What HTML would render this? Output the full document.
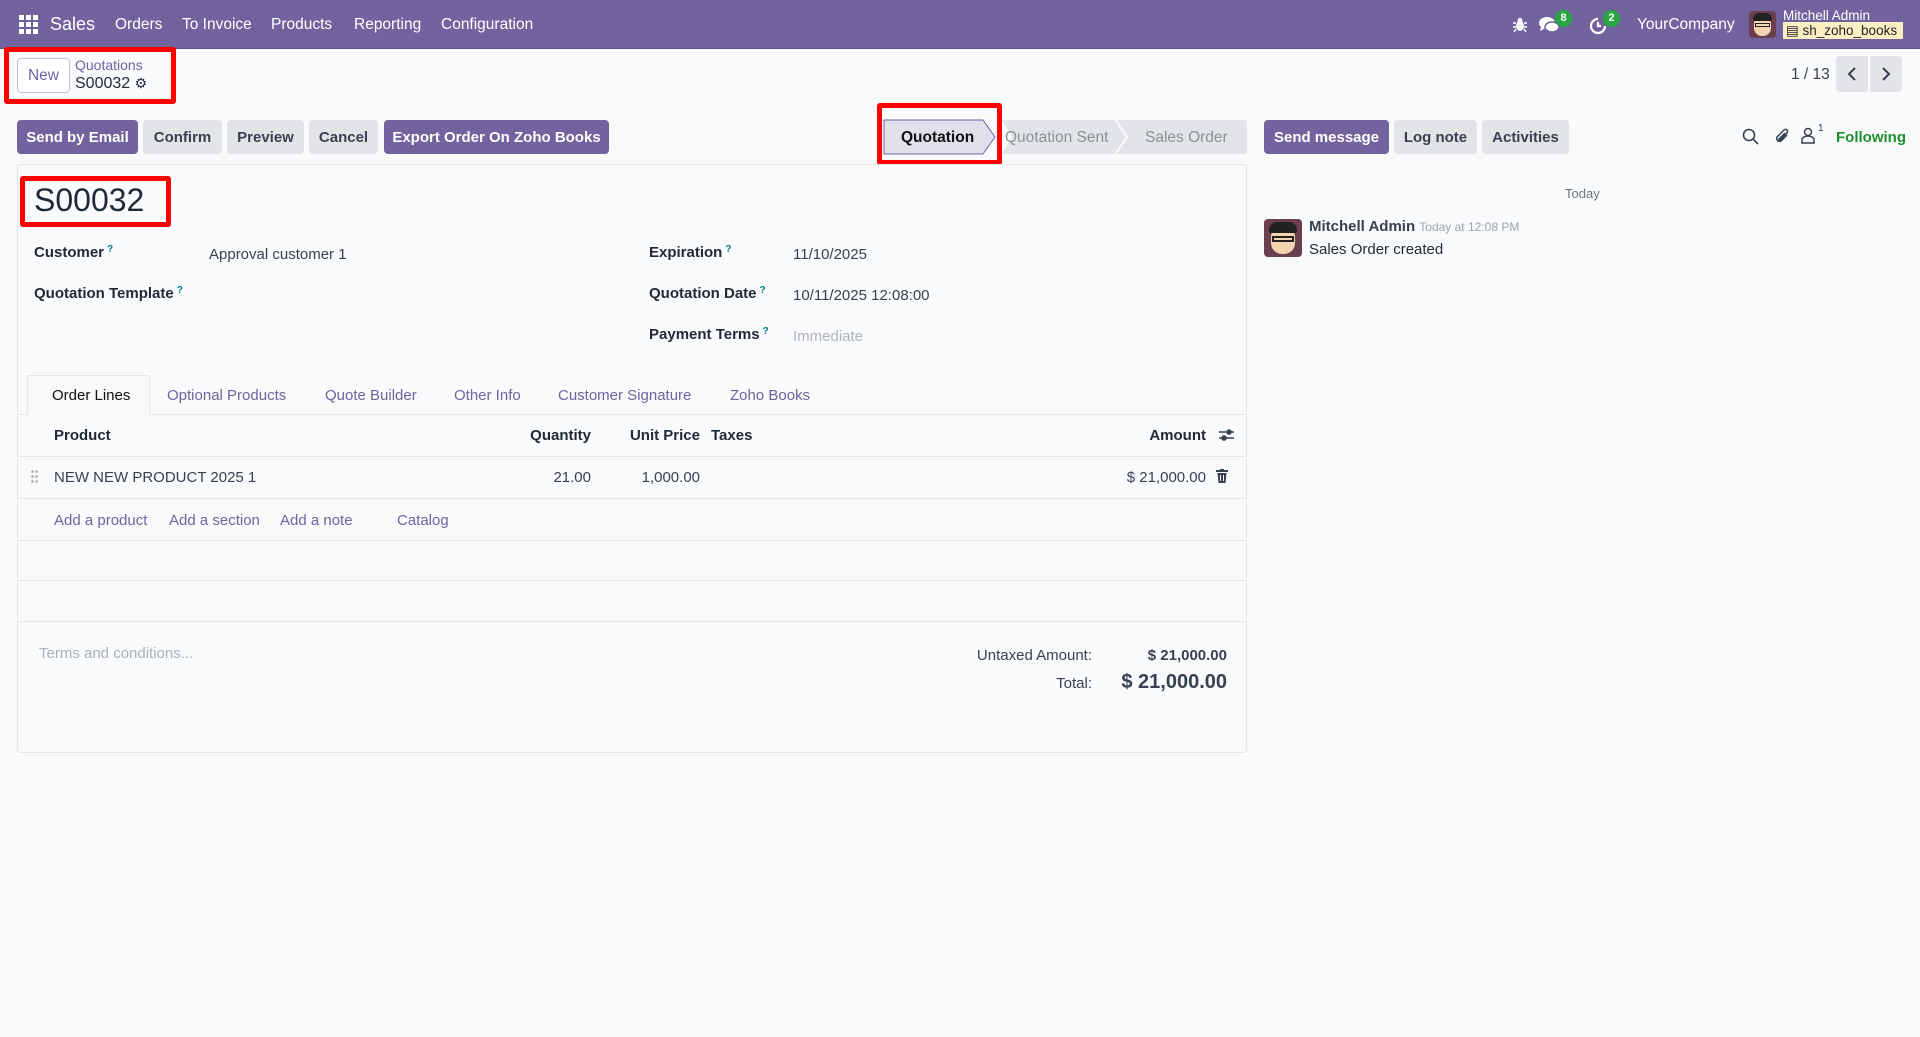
<!DOCTYPE html>
<html><head><meta charset="utf-8"><style>
*{box-sizing:border-box;margin:0;padding:0}
body{width:1920px;height:1037px;background:#f9fafb;font-family:"Liberation Sans",sans-serif;font-size:15px;color:#374151;position:relative;overflow:hidden}
.a{position:absolute;white-space:nowrap}
.nav{position:absolute;left:0;top:0;width:1920px;height:49px;background:#71639e;border-bottom:1px solid #5f5289;color:#fff}
.nav .a{top:16px;font-size:15.5px;color:#fff}
.btn{position:absolute;top:120px;height:34px;border-radius:4px;font-size:15px;line-height:35px;text-align:center;font-weight:bold}
.p{background:#71639e;color:#fff}
.s{background:#e3e4e8;color:#374151}
.red{position:absolute;border:5px solid #f00;border-radius:3px}
.lbl{font-weight:bold;color:#1f2937}
.q{color:#017e84;font-size:10px;vertical-align:top;margin-left:3px}
.tab{color:#71639e}
.hl{position:absolute;left:18px;width:1229px;height:1px;background:#e5e7eb}
.lnk{color:#71639e}
.badge{position:absolute;top:10px;height:17px;min-width:17px;border-radius:9px;background:#28a745;color:#fff;font-size:11px;font-weight:bold;text-align:center;line-height:17px}
</style></head><body>
<div class="nav">
 <svg class="a" style="left:19px;top:15px" width="19" height="19" viewBox="0 0 19 19" fill="#fff"><rect x="0" y="0" width="5" height="5"/><rect x="7" y="0" width="5" height="5"/><rect x="14" y="0" width="5" height="5"/><rect x="0" y="7" width="5" height="5"/><rect x="7" y="7" width="5" height="5"/><rect x="14" y="7" width="5" height="5"/><rect x="0" y="14" width="5" height="5"/><rect x="7" y="14" width="5" height="5"/><rect x="14" y="14" width="5" height="5"/></svg>
 <div class="a" style="left:50px;top:14px;font-size:18px">Sales</div>
 <div class="a" style="left:115px">Orders</div>
 <div class="a" style="left:182px">To Invoice</div>
 <div class="a" style="left:271px">Products</div>
 <div class="a" style="left:354px">Reporting</div>
 <div class="a" style="left:441px">Configuration</div>
 <svg class="a" style="left:1513px;top:17px" width="14" height="16" viewBox="0 0 14 16" fill="#fff"><ellipse cx="7" cy="9" rx="4" ry="5"/><circle cx="7" cy="3.5" r="2.5"/><path d="M0 6h3M11 6h3M0 10h3M11 10h3M1 15l2-3M13 15l-2-3" stroke="#fff" stroke-width="1.5"/></svg>
 <svg class="a" style="left:1539px;top:16px" width="22" height="18" viewBox="0 0 22 18" fill="#fff"><ellipse cx="8" cy="7" rx="8" ry="6"/><ellipse cx="13" cy="11" rx="7" ry="5" fill="#fff" stroke="#71639e" stroke-width="1.5"/><path d="M2 11l-1 4 4-2z"/></svg>
 <div class="badge" style="left:1555px">8</div>
 <svg class="a" style="left:1589px;top:17px" width="18" height="18" viewBox="0 0 18 18" fill="none" stroke="#fff" stroke-width="2.2"><path d="M9 2a7 7 0 1 0 7 7"/><path d="M9 5v4h3"/></svg>
 <div class="badge" style="left:1603px">2</div>
 <div class="a" style="left:1637px">YourCompany</div>
 <div class="a" style="left:1749px;top:11px;width:27px;height:27px;border-radius:4px;background:#6b3f4f;overflow:hidden"><div style="position:absolute;left:5px;top:5px;width:17px;height:20px;border-radius:8px;background:#f3d3b0"></div><div style="position:absolute;left:4px;top:2px;width:19px;height:8px;border-radius:6px 6px 2px 2px;background:#222"></div><div style="position:absolute;left:6px;top:12px;width:15px;height:4px;border:1.5px solid #222"></div></div>
 <div class="a" style="left:1783px;top:8px;font-size:13.5px">Mitchell Admin</div>
 <div class="a" style="left:1783px;top:22px;width:120px;height:17px;background:#fbefc4;color:#222;font-size:13.5px;line-height:17px;padding-left:3px">&#9636; sh_zoho_books</div>
</div>

<div class="red" style="left:4px;top:47px;width:172px;height:57px"></div>
<div class="a" style="left:17px;top:58px;width:53px;height:35px;border:1px solid #c5c0d8;border-radius:4px;background:#fff;color:#71639e;text-align:center;line-height:33px;font-size:15.5px">New</div>
<div class="a lnk" style="left:75px;top:57px;font-size:14px">Quotations</div>
<div class="a" style="left:75px;top:75px;font-size:16px;color:#1f2937">S00032 <span style="font-size:14px">&#9881;</span></div>
<div class="a" style="left:1791px;top:66px;font-size:15.5px;color:#374151">1 / 13</div>
<div class="a" style="left:1836px;top:56px;width:66px;height:36px;background:#e3e4e8;border-radius:4px"></div>
<div class="a" style="left:1868px;top:56px;width:2px;height:36px;background:#f9fafb"></div>
<svg class="a" style="left:1846px;top:66px" width="12" height="16" viewBox="0 0 12 16" fill="none" stroke="#374151" stroke-width="2"><path d="M9 2L3 8l6 6"/></svg>
<svg class="a" style="left:1880px;top:66px" width="12" height="16" viewBox="0 0 12 16" fill="none" stroke="#374151" stroke-width="2"><path d="M3 2l6 6-6 6"/></svg>

<div class="btn p" style="left:17px;width:121px">Send by Email</div>
<div class="btn s" style="left:143px;width:79px">Confirm</div>
<div class="btn s" style="left:227px;width:77px">Preview</div>
<div class="btn s" style="left:309px;width:69px">Cancel</div>
<div class="btn p" style="left:384px;width:225px">Export Order On Zoho Books</div>

<svg class="a" style="left:882px;top:119px" width="366" height="36" viewBox="0 0 366 36">
 <path d="M120 1H362q3 0 3 3v28q0 3-3 3H120l10-17z" fill="#e3e4e8"/>
 <path d="M2 1H101l12 17-12 17H2z" fill="#e1dfec" stroke="#71639e" stroke-width="1"/>
 <path d="M233 0l12 18-12 18" fill="none" stroke="#f9fafb" stroke-width="2"/>
</svg>
<div class="a" style="left:901px;top:129px;font-size:15.5px;font-weight:bold;color:#111">Quotation</div>
<div class="a" style="left:1005px;top:129px;font-size:15.5px;color:#8a8f99">Quotation Sent</div>
<div class="a" style="left:1145px;top:129px;font-size:15.5px;color:#8a8f99">Sales Order</div>
<div class="red" style="left:877px;top:103px;width:125px;height:62px"></div>

<div class="a" style="left:17px;top:164px;width:1230px;height:589px;border:1px solid #e5e7eb;border-radius:3px;background:#f9fafb"></div>
<div class="red" style="left:20px;top:176px;width:151px;height:51px"></div>
<div class="a" style="left:34px;top:182px;font-size:32px;color:#1f2937">S00032</div>

<div class="a lbl" style="left:34px;top:244px">Customer<span class="q">?</span></div>
<div class="a" style="left:209px;top:246px">Approval customer 1</div>
<div class="a lbl" style="left:34px;top:285px">Quotation Template<span class="q">?</span></div>
<div class="a lbl" style="left:649px;top:244px">Expiration<span class="q">?</span></div>
<div class="a" style="left:793px;top:246px">11/10/2025</div>
<div class="a lbl" style="left:649px;top:285px">Quotation Date<span class="q">?</span></div>
<div class="a" style="left:793px;top:287px">10/11/2025 12:08:00</div>
<div class="a lbl" style="left:649px;top:326px">Payment Terms<span class="q">?</span></div>
<div class="a" style="left:793px;top:328px;color:#b0b4bb">Immediate</div>

<div class="a" style="left:27px;top:375px;width:123px;height:40px;border:1px solid #e5e7eb;border-bottom:none;background:#f9fafb;z-index:2"></div>
<div class="hl" style="top:414px"></div>
<div class="a" style="left:52px;top:387px;color:#111;z-index:3">Order Lines</div>
<div class="a tab" style="left:167px;top:387px">Optional Products</div>
<div class="a tab" style="left:325px;top:387px">Quote Builder</div>
<div class="a tab" style="left:454px;top:387px">Other Info</div>
<div class="a tab" style="left:558px;top:387px">Customer Signature</div>
<div class="a tab" style="left:730px;top:387px">Zoho Books</div>

<div class="a lbl" style="left:54px;top:427px">Product</div>
<div class="a lbl" style="right:1329px;top:427px">Quantity</div>
<div class="a lbl" style="right:1220px;top:427px">Unit Price</div>
<div class="a lbl" style="left:711px;top:427px">Taxes</div>
<div class="a lbl" style="right:714px;top:427px">Amount</div>
<svg class="a" style="left:1219px;top:428px" width="15" height="14" viewBox="0 0 15 14" stroke="#374151" stroke-width="1.6"><path d="M0 4h15M0 10h15"/><circle cx="10" cy="4" r="2" fill="#374151"/><circle cx="5" cy="10" r="2" fill="#374151"/></svg>
<div class="hl" style="top:456px"></div>
<svg class="a" style="left:31px;top:470px" width="7" height="13" viewBox="0 0 7 13" fill="#aaa"><circle cx="1.5" cy="1.5" r="1.3"/><circle cx="5.5" cy="1.5" r="1.3"/><circle cx="1.5" cy="6.5" r="1.3"/><circle cx="5.5" cy="6.5" r="1.3"/><circle cx="1.5" cy="11.5" r="1.3"/><circle cx="5.5" cy="11.5" r="1.3"/></svg>
<div class="a" style="left:54px;top:469px">NEW NEW PRODUCT 2025 1</div>
<div class="a" style="right:1329px;top:469px">21.00</div>
<div class="a" style="right:1220px;top:469px">1,000.00</div>
<div class="a" style="right:714px;top:469px">$ 21,000.00</div>
<svg class="a" style="left:1216px;top:469px" width="12" height="14" viewBox="0 0 12 14" fill="#374151"><rect x="0" y="1" width="12" height="2"/><rect x="4" y="0" width="4" height="2"/><path d="M1.5 4h9l-1 10h-7z"/><path d="M4.5 6v6M7.5 6v6" stroke="#f9fafb" stroke-width="1"/></svg>
<div class="hl" style="top:498px"></div>
<div class="a lnk" style="left:54px;top:512px">Add a product</div>
<div class="a lnk" style="left:169px;top:512px">Add a section</div>
<div class="a lnk" style="left:280px;top:512px">Add a note</div>
<div class="a lnk" style="left:397px;top:512px">Catalog</div>
<div class="hl" style="top:540px"></div>
<div class="hl" style="top:580px"></div>
<div class="hl" style="top:621px"></div>

<div class="a" style="left:39px;top:645px;color:#aab0b7">Terms and conditions...</div>
<div class="a" style="right:828px;top:647px">Untaxed Amount:</div>
<div class="a" style="right:693px;top:647px;font-weight:bold">$ 21,000.00</div>
<div class="a" style="right:828px;top:675px">Total:</div>
<div class="a" style="right:693px;top:671px;font-weight:bold;font-size:20px">$ 21,000.00</div>

<div class="btn p" style="left:1264px;width:125px">Send message</div>
<div class="btn s" style="left:1394px;width:83px">Log note</div>
<div class="btn s" style="left:1482px;width:87px">Activities</div>
<svg class="a" style="left:1742px;top:128px" width="17" height="17" viewBox="0 0 17 17" fill="none" stroke="#374151" stroke-width="1.6"><circle cx="7" cy="7" r="5.5"/><path d="M11 11l5 5"/></svg>
<svg class="a" style="left:1774px;top:126px" width="17" height="19" viewBox="0 0 17 19" fill="none" stroke="#374151" stroke-width="1.5"><path d="M13 9l-6 6a3 3 0 0 1-4-4l7-7a2 2 0 0 1 3 3l-7 7a1 1 0 0 1-1-1l6-6"/></svg>
<svg class="a" style="left:1801px;top:127px" width="14" height="17" viewBox="0 0 14 17" fill="none" stroke="#374151" stroke-width="1.5"><circle cx="7" cy="5" r="3.5"/><path d="M1 16v-3a6 4 0 0 1 12 0v3z"/></svg>
<div class="a" style="left:1818px;top:123px;font-size:10px">1</div>
<div class="a" style="left:1836px;top:129px;font-size:15px;font-weight:bold;color:#1e8f2e">Following</div>

<div class="a" style="left:1565px;top:186px;font-size:13px;color:#6b7280">Today</div>
<div class="a" style="left:1264px;top:219px;width:38px;height:38px;border-radius:4px;background:#6b3f4f;overflow:hidden"><div style="position:absolute;left:7px;top:7px;width:24px;height:28px;border-radius:11px;background:#f3d3b0"></div><div style="position:absolute;left:5px;top:3px;width:28px;height:11px;border-radius:8px 8px 2px 2px;background:#222"></div><div style="position:absolute;left:8px;top:17px;width:22px;height:6px;border:2px solid #222"></div></div>
<div class="a" style="left:1309px;top:218px;font-weight:bold;color:#374151">Mitchell Admin <span style="font-weight:normal;font-size:12px;color:#9ca3af">Today at 12:08 PM</span></div>
<div class="a" style="left:1309px;top:241px;color:#1f2937">Sales Order created</div>
</body></html>
